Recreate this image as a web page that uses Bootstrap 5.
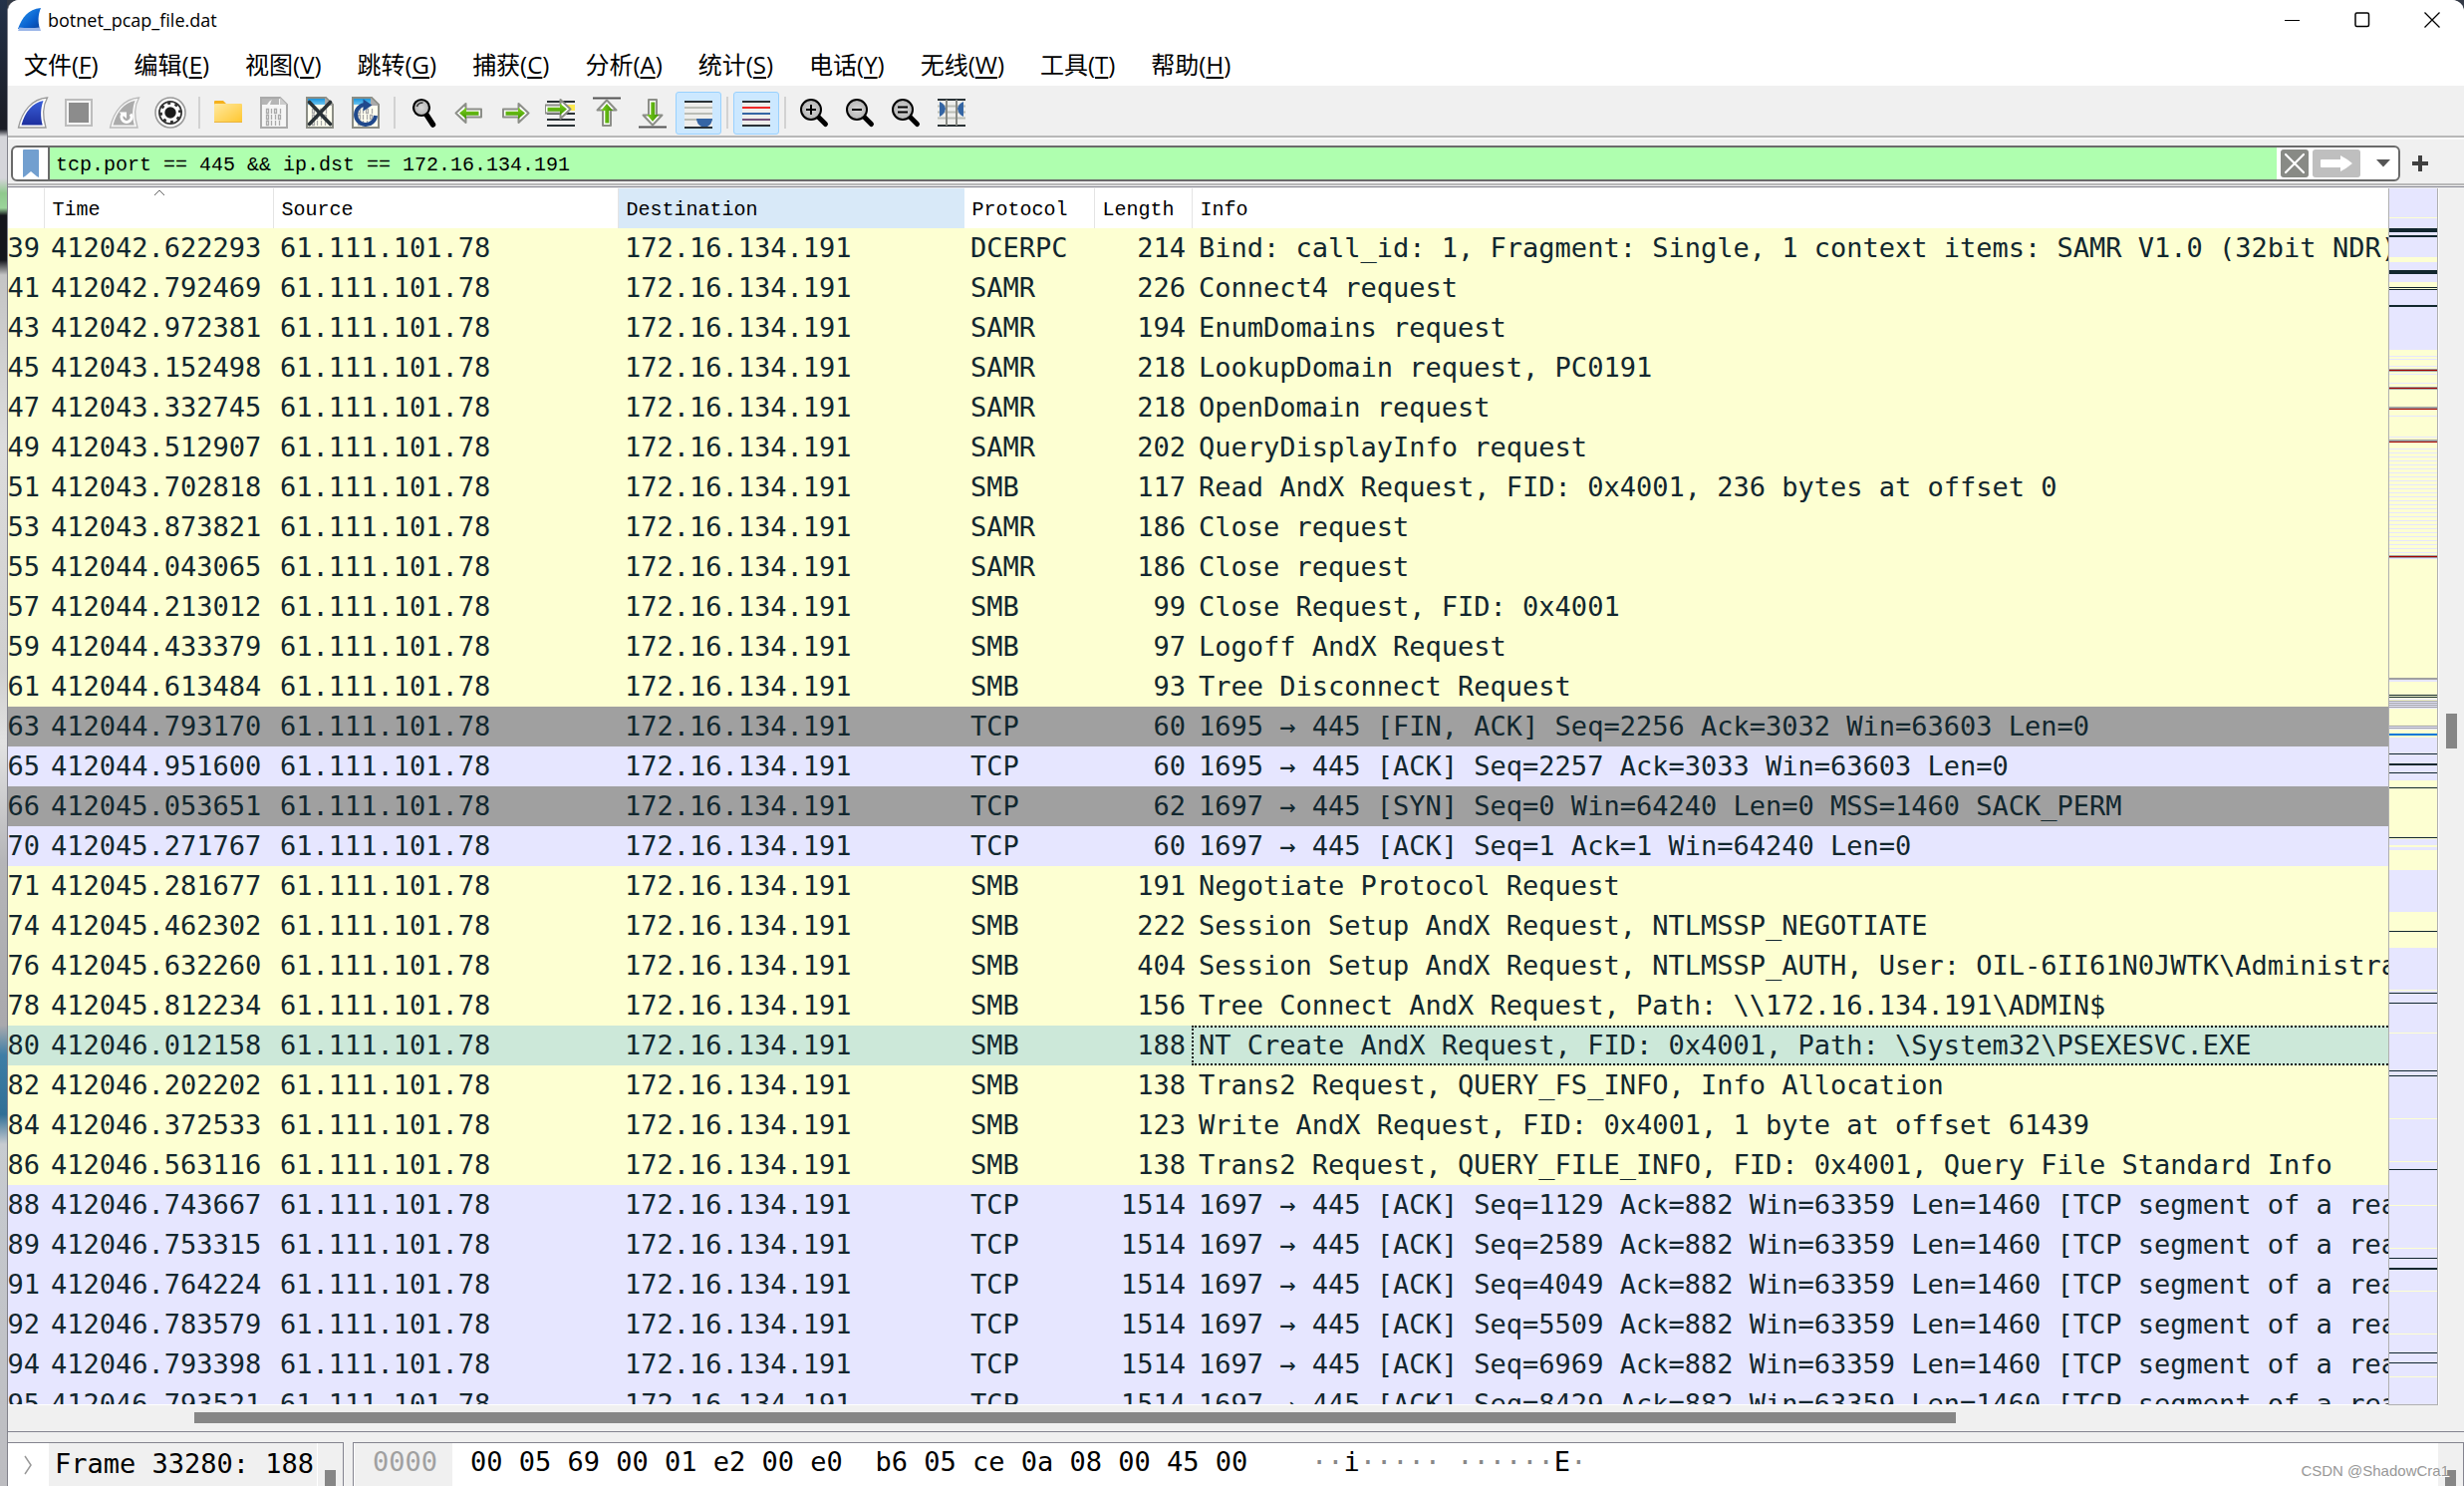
<!DOCTYPE html>
<html lang="zh-CN">
<head>
<meta charset="utf-8">
<meta name="viewport" content="width=device-width, initial-scale=1">
<title>botnet_pcap_file.dat</title>
<link rel="stylesheet" href="https://cdn.jsdelivr.net/npm/bootstrap@5.3.0/dist/css/bootstrap.min.css">
<style>
:root{--ui:"Noto Sans","Noto Sans CJK SC",sans-serif;--mono:"DejaVu Sans Mono","Liberation Mono",monospace;--head:"Liberation Mono","Noto Sans CJK SC",monospace;
--yellow:#fdffd2;--lav:#e6e6ff;--gray:#a0a0a0;--dark:#12272e}
body{font-family:var(--ui);color:#000;background:#343a46;height:100vh;overflow:hidden}
.desk{width:7px;background:linear-gradient(#243249 0,#1b1d26 8%,#1b1d26 8.7%,#d5d5da 9.2%,#d5d5da 12%,#8fc98d 13%,#9bd49a 14%,#15161c 14.5%,#15161c 17.5%,#c4c4c4 18.5%,#dcdcdc 30%,#cfcfcf 45%,#e2e2e2 50%,#b5b5b8 58%,#a9a9ad 69%,#3e7ea6 71%,#2f6f96 75%,#c7cbd0 77%,#bcbcc0 100%)}
.app{background:#f0f0f0;border-left:1px solid #83838c;border-radius:12px 12px 0 0;min-width:0}
.bar-title,.bar-menu{background:#fff}
.bar-title{height:40px;padding-left:10px}
.bar-title h1{font:18px/40px "Open Sans",var(--ui);margin:0 0 0 6px}
.winbtn{border:0;background:none;width:70px;height:42px;padding:0;display:flex;align-items:center;justify-content:center}
.winbtns{margin-right:-3px}
.bar-menu{height:48px;border-bottom:2px solid #f0f0f0;padding:0 0 0 16px;gap:36px}
.bar-menu .nav-link{font:24px/50px "Open Sans","Noto Sans CJK SC",sans-serif;color:#000;padding:0;white-space:nowrap}
.bar-menu u{text-underline-offset:3px}
.bar-tools{height:50px;border-bottom:2px solid #b8b8b8;padding:2px 0 0 2px}
.tool{width:46px;height:43px;border:1px solid transparent;border-radius:3px;background:none;padding:0;display:flex;align-items:center;justify-content:center;flex-shrink:0}
.tool.active{background:#cce8ff;border-color:#99d1ff}
.tsep{width:12px;height:32px;display:flex;justify-content:center}
.tsep::before{content:"";width:2px;background:#d2d2d2}
.bar-filter{height:48px;border-top:2px solid #fafafa;border-bottom:2px solid #b8b8b8;padding:3px 0 0 3px}
.fbox{height:36px;border:2px solid #6a6a6a;border-radius:6px;background:#fff;overflow:hidden}
.fbox button,.plus{border:0;background:none;padding:0;display:flex;align-items:center;justify-content:center}
.fbox .bm{width:35px;height:32px}
.fbox input{border:0;border-left:2px solid #6a6a6a;border-radius:0;background:#afffaf;height:32px;padding:4px 6px 0;font:20px/28px var(--head);color:#000;min-width:0;outline:0}
.plus{width:40px;height:36px;margin-right:24px}
.list-frame{border-top:1px solid #84848f;margin-top:1px;border-bottom:1px solid #84848f;min-height:0}
.list-body{min-height:0;flex:1 1 0;padding-top:1px;overflow:hidden}
.tview{background:#fff;overflow:hidden;min-width:0;border-bottom:1px solid #fff}
.pk{table-layout:fixed;width:calc(100% + 4px);border-collapse:collapse;color:var(--dark)}
.pk th{font:20px/36px var(--head);height:40px;color:#000;padding:4px 0 0 8px;border-right:1px solid #e4e4e4;position:relative;white-space:nowrap}
.pk th.hot{background:#d8e9f8;border-color:#d8e9f8}
.pk th svg{position:absolute;top:1px;left:50%;margin-left:-5px}
.pk td{font:27px/38px var(--mono);height:40px;padding:0 0 0 7px;white-space:nowrap;overflow:hidden}
.pk td.num{padding:0 6px 0 0;text-align:right}
.pk td.cut{direction:rtl;padding:0 4px 0 0}
.pk .smb{background:var(--yellow)}.pk .tcp{background:var(--lav)}.pk .syn{background:var(--gray)}.pk .sel{background:#cce8d9}
.pk .sel td.info{outline:2px dotted #111;outline-offset:-2px}
.mini{width:50px;border:1px solid #b0b0b0;border-top:0;background:var(--lav);overflow:hidden}
.mini svg{display:block}
.vbar{width:26px;border-left:1px solid #fff;background:#f0f0f0}
.vthumb{width:11px;background:#868686}
.vthumb.low{height:16px}
.hbar{height:26px;padding-top:7px}
.hthumb{height:11px;margin:0 20.7% 0 7.6%;background:#868686}
.panes{height:44px;gap:9px;margin-top:10px;font:27px/38px var(--mono)}
.pane{border:1px solid #84848f;border-bottom:0;border-left:0;background:#fff;overflow:hidden;white-space:pre}
.pane.tree{width:337px}
.exp{width:41px}
.tree-txt{background:#f0f0f0;padding:2px 0 0 6px;width:269px;overflow:hidden}
.pane.hex{border-left:1px solid #84848f;padding-left:1px}
.off{background:#f0f0f0;color:#a0a0a0;width:98px;padding-left:18px;flex-shrink:0}
.bytes{padding-left:18px;width:862px;flex-shrink:0}
.asc{color:#888}.asc b{font-weight:400;color:#000}
.wm{position:absolute;right:15px;bottom:4px;font:15px/22px "Liberation Sans",sans-serif;color:#989898;text-shadow:1px 1px 0 #fff}
</style>
<script src="https://cdn.jsdelivr.net/npm/bootstrap@5.3.0/dist/js/bootstrap.bundle.min.js"></script>
</head>
<body class="d-flex">
<svg width="0" height="0" class="position-absolute" aria-hidden="true">
<defs>
<linearGradient id="fin" x1="0" y1="0" x2="0" y2="1"><stop offset="0" stop-color="#3a5fd9"/><stop offset="1" stop-color="#1d2f9e"/></linearGradient>
<linearGradient id="fin2" x1="0" y1="0" x2="1" y2="1"><stop offset="0" stop-color="#2d9bf0"/><stop offset=".6" stop-color="#0a62d0"/><stop offset="1" stop-color="#0a3f9a"/></linearGradient>
<linearGradient id="grn" x1="0" y1="0" x2="0" y2="1"><stop offset="0" stop-color="#7ed321"/><stop offset="1" stop-color="#3f9200"/></linearGradient>
<linearGradient id="fold" x1="0" y1="0" x2="1" y2="1"><stop offset="0" stop-color="#ffe9a0"/><stop offset="1" stop-color="#ffc62e"/></linearGradient>
<linearGradient id="sky" x1="0" y1="0" x2="0" y2="1"><stop offset="0" stop-color="#1a94dc"/><stop offset="1" stop-color="#6cc4f0"/></linearGradient>
<radialGradient id="glass"><stop offset="0" stop-color="#d8d8d8"/><stop offset="1" stop-color="#b4b4b4"/></radialGradient>
<g id="bits" fill="none" stroke-width="1.3"><path d="M8.500 12.500h2v4h-2zM16.500 12.500h2v4h-2zM8.500 18.500h2v4h-2zM20.500 18.500h2v4h-2zM8.500 24.500h2v4h-2zM13.500 12v5M22.500 12v5M13.500 18v5M17.500 18v5M13.500 24v5M17.500 24v5M21.500 24v5"/></g>
<g id="arr"><path d="M2.500 16.500 12.500 7v5.500h15.500v8H12.500V26z" fill="#fff" stroke="#8c8e88" stroke-width="2" stroke-linejoin="round"/><path d="M6 16.500 13 10.800v4h12.500v4H13v3.800z" fill="url(#grn)"/></g>
<g id="lens"><path d="M19 19l8.500 8.500" stroke="#000" stroke-width="5" stroke-linecap="round"/><circle cx="13" cy="13" r="10" fill="url(#glass)" stroke="#000" stroke-width="2"/></g>
</defs>
</svg>
<div class="desk flex-shrink-0"></div>
<div class="app d-flex flex-column flex-grow-1 overflow-hidden">
<header class="bar-title d-flex align-items-center">
<svg width="24" height="24" viewBox="0 0 24 24"><path d="M0 21C4 10 10 1 23 0c-3 7-3 14-1 21z" fill="url(#fin2)"/><path d="M0 23l1.500-3.500q10 1 20.500 0l1 3.500z" fill="#9bb6e8"/></svg>
<h1>botnet_pcap_file.dat</h1>
<div class="winbtns d-flex ms-auto">
<button class="winbtn" aria-label="最小化"><svg width="16" height="16"><path d="M0 8.500h15" stroke="#000" stroke-width="1.200"/></svg></button>
<button class="winbtn" aria-label="最大化"><svg width="16" height="16"><rect x="1" y="1" width="13.500" height="13.500" rx="1.500" fill="none" stroke="#000" stroke-width="1.500"/></svg></button>
<button class="winbtn" aria-label="关闭"><svg width="16" height="16"><path d="M.5.5l15 15M15.500.5l-15 15" stroke="#000" stroke-width="1.300"/></svg></button>
</div>
</header>
<nav class="bar-menu nav flex-nowrap">
<a class="nav-link" href="#">文件(<u>F</u>)</a><a class="nav-link" href="#">编辑(<u>E</u>)</a><a class="nav-link" href="#">视图(<u>V</u>)</a><a class="nav-link" href="#">跳转(<u>G</u>)</a><a class="nav-link" href="#">捕获(<u>C</u>)</a><a class="nav-link" href="#">分析(<u>A</u>)</a><a class="nav-link" href="#">统计(<u>S</u>)</a><a class="nav-link" href="#">电话(<u>Y</u>)</a><a class="nav-link" href="#">无线(<u>W</u>)</a><a class="nav-link" href="#">工具(<u>T</u>)</a><a class="nav-link" href="#">帮助(<u>H</u>)</a>
</nav>
<div class="bar-tools d-flex align-items-center" role="toolbar">
<button class="tool" aria-label="开始"><svg width="32" height="32"><path d="M1.500 31C5 15 15 2 30.500 1c-5 9-4.500 20-1.500 30z" fill="#fff" stroke="#999" stroke-width="1.300"/><path d="M4.500 28.500C8 15 16 6 26.500 4c-3 8-3 16-.8 24.500z" fill="url(#fin)"/></svg></button>
<button class="tool" aria-label="停止"><svg width="32" height="32"><rect x="3" y="3" width="26" height="26" fill="#f4f4f4" stroke="#bdbdbd" stroke-width="2"/><rect x="6" y="6" width="20" height="20" fill="#8c8c8c"/></svg></button>
<button class="tool" aria-label="重新开始"><svg width="32" height="32"><path d="M1.500 31C5 15 15 2 30.500 1c-5 9-4.500 20-1.500 30z" fill="#f6f6f6" stroke="#bbb" stroke-width="1.300"/><path d="M4.500 28.500C8 15 16 6 26.500 4c-3 8-3 16-.8 24.500z" fill="#ababab"/><path d="M14 17.500a5 5 0 1 0 8 0" fill="none" stroke="#fff" stroke-width="3"/><path d="M10.500 15.500h7.500v6.500z" fill="#fff"/></svg></button>
<button class="tool" aria-label="捕获选项"><svg width="32" height="32"><circle cx="16" cy="16" r="15" fill="#fff" stroke="#999" stroke-width="1.600"/><circle cx="16" cy="16" r="12" fill="#333"/><circle cx="16" cy="16" r="8.500" fill="none" stroke="#fff" stroke-width="3.500" stroke-dasharray="3.900 2.776"/><circle cx="16" cy="16" r="7" fill="none" stroke="#fff" stroke-width="2.500"/><circle cx="16" cy="16" r="5" fill="#1a1a1a"/></svg></button>
<span class="tsep"></span>
<button class="tool" aria-label="打开"><svg width="32" height="32"><path d="M2 7V5q0-1 1-1h8l3 3v3H2z" fill="#f5b11d"/><rect x="2" y="7" width="28" height="19" rx="1" fill="url(#fold)"/><path d="M2 25.500h28" stroke="#e9b33e"/></svg></button>
<button class="tool" aria-label="保存"><svg width="32" height="32"><path d="M3 1h19l7 7v23H3z" fill="#f6f6f6" stroke="#aaa" stroke-width="2"/><path d="M4 2h17v6H12q1-4 2-5-3 1-5 5H4z" fill="#b5b5b5"/><path d="M22 1v7h7z" fill="#ccc"/><use href="#bits" stroke="#aaa"/></svg></button>
<button class="tool" aria-label="关闭文件"><svg width="32" height="32"><path d="M3 1h19l7 7v23H3z" fill="#fffff0" stroke="#8b8d85" stroke-width="2"/><path d="M4 2h17v6H4z" fill="url(#sky)"/><path d="M21 1v8h8z" fill="#aaa"/><use href="#bits" stroke="#aaa"/><path d="M5.500 5.500l21 22M26.500 5.500l-21 22" stroke="#2a3236" stroke-width="3.600" stroke-linecap="round"/></svg></button>
<button class="tool" aria-label="重新加载"><svg width="32" height="32"><path d="M3 1h19l7 7v23H3z" fill="#fffff0" stroke="#8b8d85" stroke-width="2"/><path d="M4 2h17v6H4z" fill="url(#sky)"/><path d="M21 1v8h8z" fill="#aaa"/><use href="#bits" stroke="#aaa"/><path d="M16 8a10 10 0 1 0 10 11" fill="none" stroke="#20498c" stroke-width="4"/><path d="M13.500 2.500l9 6-9 6z" fill="#20498c"/></svg></button>
<span class="tsep"></span>
<button class="tool" aria-label="查找"><svg width="32" height="32"><path d="M19 18l6.500 10" stroke="#000" stroke-width="5.500" stroke-linecap="round"/><circle cx="14" cy="11" r="8" fill="url(#glass)" stroke="#000" stroke-width="2.200"/><path d="M9.500 10q1-4 6-4" stroke="#333" stroke-width="1.500" fill="none"/></svg></button>
<button class="tool" aria-label="后退"><svg width="32" height="32"><use href="#arr"/></svg></button>
<button class="tool" aria-label="前进"><svg width="32" height="32"><use href="#arr" transform="matrix(-1 0 0 1 32 0)"/></svg></button>
<button class="tool" aria-label="转到分组"><svg width="32" height="32"><path d="M20 11h10" stroke="#fce94f" stroke-width="6"/><path d="M2 5h28M2 17h28M2 23h28M2 29h28" stroke="#2a3236" stroke-width="2"/><use href="#arr" transform="matrix(-1 0 0 1 28 -4)"/></svg></button>
<button class="tool" aria-label="首个分组"><svg width="32" height="32"><path d="M2 1.500h28" stroke="#555" stroke-width="2"/><use href="#arr" transform="matrix(0 1 1 0 -.5 1)"/></svg></button>
<button class="tool" aria-label="最后分组"><svg width="32" height="32"><path d="M2 30.500h28" stroke="#555" stroke-width="2"/><use href="#arr" transform="matrix(0 -1 1 0 -.5 31)"/></svg></button>
<button class="tool active" aria-label="自动滚动"><svg width="32" height="32"><path d="M2 4h28v26H2z" fill="#eeeeec"/><path d="M2 11h28M2 17h28M2 23h28" stroke="#babdb6" stroke-width="2"/><path d="M2 5h28M2 31h28" stroke="#2a3236" stroke-width="2"/><path d="M14 22h16q0 5-5 8h-6q-5-3-5-8z" fill="#3465a4"/></svg></button>
<span class="tsep"></span>
<button class="tool active" aria-label="着色"><svg width="32" height="32"><path d="M2 4h28v26H2z" fill="#eeeeec"/><path d="M2 5h28M2 29h28" stroke="#2a3236" stroke-width="2"/><path d="M2 11h28" stroke="#ef2929" stroke-width="2"/><path d="M2 17h28" stroke="#3465a4" stroke-width="2"/><path d="M2 23h28" stroke="#75507b" stroke-width="2"/></svg></button>
<span class="tsep"></span>
<button class="tool" aria-label="放大"><svg width="32" height="32"><use href="#lens"/><path d="M8 13h10M13 8v10" stroke="#000" stroke-width="2"/></svg></button>
<button class="tool" aria-label="缩小"><svg width="32" height="32"><use href="#lens"/><path d="M8 13h10" stroke="#000" stroke-width="2"/></svg></button>
<button class="tool" aria-label="原始大小"><svg width="32" height="32"><use href="#lens"/><path d="M8 10.500h10M8 15.500h10" stroke="#000" stroke-width="2"/></svg></button>
<button class="tool" aria-label="调整列宽"><svg width="32" height="32"><path d="M2 3h28v26H2z" fill="#eeeeec"/><path d="M2 9.500h28M2 15.500h28M2 21.500h28" stroke="#babdb6" stroke-width="2"/><path d="M2 3h28M2 29h28" stroke="#2a3236" stroke-width="2"/><path d="M11 3v26M21 3v26" stroke="#888a85" stroke-width="2"/><path d="M4 5q5 2 6 7-1 6-6 8zM28 5q-5 2-6 7 1 6 6 8z" fill="#3465a4"/></svg></button>
</div>
<div class="bar-filter d-flex align-items-center">
<div class="fbox d-flex align-items-center flex-grow-1">
<button class="bm" aria-label="书签"><svg width="16" height="28"><path d="M0 1q0-1 1-1h14q1 0 1 1v27l-2-1-6-5-6 5-2 1z" fill="#729fcf"/></svg></button>
<input class="flex-grow-1" type="text" aria-label="显示过滤器" value="tcp.port == 445 &amp;&amp; ip.dst == 172.16.134.191">
<button class="ms-1" aria-label="清除"><svg width="28" height="28"><rect width="28" height="28" rx="3" fill="#888a85"/><path d="M5 5l18 18M23 5L5 23" stroke="#fff" stroke-width="2.200" stroke-linecap="round"/></svg></button>
<button class="mx-1" aria-label="应用"><svg width="48" height="28"><rect width="48" height="28" rx="3" fill="#bfbfbf"/><path d="M9 10h19V6q6 3 12 8-6 5-12 8v-4H9q-1 0-1-1v-6q0-1 1-1z" fill="#fff"/></svg></button>
<button class="px-2 ms-1" aria-label="历史"><svg width="14" height="8"><path d="M0 0h14L7 7.500z" fill="#555"/></svg></button>
</div>
<button class="plus" aria-label="添加"><svg width="16" height="16"><path d="M0 8h16M8 0v16" stroke="#404040" stroke-width="4"/></svg></button>
</div>
<main class="list-frame d-flex flex-column flex-grow-1">
<div class="list-body d-flex">
<div class="tview flex-grow-1">
<table class="pk">
<colgroup><col style="width:36px"><col style="width:230px"><col style="width:346px"><col style="width:347px"><col style="width:131px"><col style="width:98px"><col></colgroup>
<thead><tr><th></th><th>Time<svg width="12" height="7"><path d="M1 6l5-5 5 5" fill="none" stroke="#666"/></svg></th><th>Source</th><th class="hot">Destination</th><th>Protocol</th><th>Length</th><th class="border-0">Info</th></tr></thead>
<tbody id="rows"></tbody>
</table>
</div>
<div class="mini flex-shrink-0"><svg id="mini" width="48" height="1220"></svg></div>
<div class="vbar flex-shrink-0 d-flex flex-column align-items-center"><div style="flex:526"></div><div class="vthumb" style="flex:35"></div><div style="flex:658"></div></div>
</div>
<div class="hbar"><div class="hthumb"></div></div>
</main>
<section class="panes d-flex flex-shrink-0">
<div class="pane tree d-flex flex-shrink-0"><span class="exp d-flex align-items-center justify-content-center"><svg width="10" height="20"><path d="M1 1l6 9-6 9" fill="none" stroke="#999" stroke-width="1.500"/></svg></span><span class="tree-txt">Frame 33280: 188</span><span class="vbar d-flex justify-content-center align-items-end"><span class="vthumb low"></span></span></div>
<div class="pane hex d-flex flex-grow-1"><span class="off">0000</span><span class="bytes">00 05 69 00 01 e2 00 e0  b6 05 ce 0a 08 00 45 00</span><span class="asc flex-grow-1">··<b>i</b>····· ······<b>E</b>·</span><span class="vbar d-flex justify-content-center align-items-end"><span class="vthumb low"></span></span></div>
</section>
</div>
<div class="wm">CSDN @ShadowCra1</div>
<script>
const data=`39|412042.622293|DCERPC|214|Bind: call_id: 1, Fragment: Single, 1 context items: SAMR V1.0 (32bit NDR)
41|412042.792469|SAMR|226|Connect4 request
43|412042.972381|SAMR|194|EnumDomains request
45|412043.152498|SAMR|218|LookupDomain request, PC0191
47|412043.332745|SAMR|218|OpenDomain request
49|412043.512907|SAMR|202|QueryDisplayInfo request
51|412043.702818|SMB|117|Read AndX Request, FID: 0x4001, 236 bytes at offset 0
53|412043.873821|SAMR|186|Close request
55|412044.043065|SAMR|186|Close request
57|412044.213012|SMB|99|Close Request, FID: 0x4001
59|412044.433379|SMB|97|Logoff AndX Request
61|412044.613484|SMB|93|Tree Disconnect Request
63|412044.793170|TCP|60|1695 → 445 [FIN, ACK] Seq=2256 Ack=3032 Win=63603 Len=0|syn
65|412044.951600|TCP|60|1695 → 445 [ACK] Seq=2257 Ack=3033 Win=63603 Len=0
66|412045.053651|TCP|62|1697 → 445 [SYN] Seq=0 Win=64240 Len=0 MSS=1460 SACK_PERM|syn
70|412045.271767|TCP|60|1697 → 445 [ACK] Seq=1 Ack=1 Win=64240 Len=0
71|412045.281677|SMB|191|Negotiate Protocol Request
74|412045.462302|SMB|222|Session Setup AndX Request, NTLMSSP_NEGOTIATE
76|412045.632260|SMB|404|Session Setup AndX Request, NTLMSSP_AUTH, User: OIL-6II61N0JWTK\\Administrator
78|412045.812234|SMB|156|Tree Connect AndX Request, Path: \\\\172.16.134.191\\ADMIN$
80|412046.012158|SMB|188|NT Create AndX Request, FID: 0x4001, Path: \\System32\\PSEXESVC.EXE|sel
82|412046.202202|SMB|138|Trans2 Request, QUERY_FS_INFO, Info Allocation
84|412046.372533|SMB|123|Write AndX Request, FID: 0x4001, 1 byte at offset 61439
86|412046.563116|SMB|138|Trans2 Request, QUERY_FILE_INFO, FID: 0x4001, Query File Standard Info
88|412046.743667|TCP|1514|1697 → 445 [ACK] Seq=1129 Ack=882 Win=63359 Len=1460 [TCP segment of a reassembled PDU]
89|412046.753315|TCP|1514|1697 → 445 [ACK] Seq=2589 Ack=882 Win=63359 Len=1460 [TCP segment of a reassembled PDU]
91|412046.764224|TCP|1514|1697 → 445 [ACK] Seq=4049 Ack=882 Win=63359 Len=1460 [TCP segment of a reassembled PDU]
92|412046.783579|TCP|1514|1697 → 445 [ACK] Seq=5509 Ack=882 Win=63359 Len=1460 [TCP segment of a reassembled PDU]
94|412046.793398|TCP|1514|1697 → 445 [ACK] Seq=6969 Ack=882 Win=63359 Len=1460 [TCP segment of a reassembled PDU]
95|412046.793521|TCP|1514|1697 → 445 [ACK] Seq=8429 Ack=882 Win=63359 Len=1460 [TCP segment of a reassembled PDU]`;
document.getElementById('rows').innerHTML=data.split('\n').map(l=>{const [n,t,p,len,info,k]=l.split('|');
return `<tr class="${k||(p==='TCP'?'tcp':'smb')}"><td class="cut">${n}</td><td>${t}</td><td>61.111.101.78</td><td>172.16.134.191</td><td>${p}</td><td class="num">${len}</td><td class="info">${info}</td></tr>`}).join('');
// overview strip: colour, top, height of each band of packets
const Y='#fdffd2',L='#e6e6ff',G='#a0a0a0',D='#12272e',R='#a40000';
const bands=[[Y,29,1],[D,40,4],[D,47,2],[Y,69,5],[D,82,4],[Y,94,7],[D,99,1],[D,101,1],[D,117,2],[Y,162,433],[L,168,1],[L,171,1],[L,178,1],[G,181,3],[R,182,1],[L,186,1],[L,195,1],[G,199,3],[R,200,1],[G,219,2],[R,221,1],[L,228,1],[L,249,1],[G,252,2],[R,254,1]];
for(let y=261;y<368;y+=4)bands.push([L,y,1]);
bands.push([G,368,3],[R,369,1],[L,371,1],[G,491,2],[L,493,2],[D,508,1],[D,510,1],[L,512,1],[L,514,8],[G,514,1],[G,516,1],[G,518,1],[G,520,1],[L,539,4],[G,539,1],[G,541,1],[L,551,43],[Y,549,2],['#0078d7',547,2],[D,567,1],[D,577,2],[D,586,1]);
bands.push([Y,594,59],[D,601,1],[D,651,1],[Y,659,2],[Y,664,20],[Y,726,36],[D,745,1]);
[804,847,933,976,1020,1063,1106,1149,1192].forEach(y=>bands.push([Y,y,1]));
[807,817,885,890,984,1073,1168,1178].forEach(y=>bands.push([D,y,1]));
bands.push([D,1083,2]);
document.getElementById('mini').innerHTML=bands.map(([c,y,h])=>`<rect x="0" y="${y}" width="48" height="${h}" fill="${c}"/>`).join('');
</script>
</body>
</html>
